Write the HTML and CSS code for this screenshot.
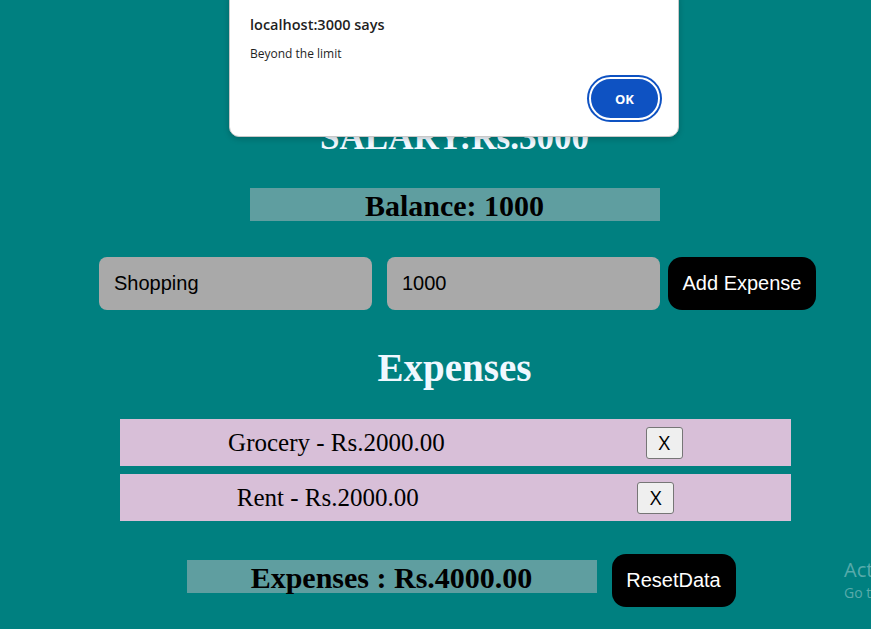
FILE: index.html
```html
<!DOCTYPE html>
<html>
<head>
<meta charset="utf-8">
<link rel="stylesheet" href="styles.css">
</head>
<body>
<div class="app">
  <h1 class="salary">SALARY:Rs.3000</h1>
  <h2 class="balance">Balance: 1000</h2>
  <div class="form">
    <input class="field field-name" type="text" value="Shopping">
    <input class="field field-amount" type="text" value="1000">
    <button class="btn btn-add">Add Expense</button>
  </div>
  <h1 class="list-title">Expenses</h1>
  <ul class="list">
    <li class="item"><span class="item-text">Grocery - Rs.2000.00</span><button class="del">X</button></li>
    <li class="item"><span class="item-text">Rent - Rs.2000.00</span><button class="del">X</button></li>
  </ul>
  <div class="footer">
    <h2 class="total">Expenses : Rs.4000.00</h2>
    <button class="btn btn-reset">ResetData</button>
  </div>
</div>

<div class="dialog">
  <div class="dialog-title">localhost:3000 says</div>
  <div class="dialog-msg">Beyond the limit</div>
  <div class="dialog-actions">
    <button class="dialog-ok">OK</button>
  </div>
</div>

<div class="watermark">
  <div class="wm-title">Activate Windows</div>
  <div class="wm-sub">Go to Settings to activate Windows.</div>
</div>
</body>
</html>
```

FILE: styles.css
```css
html, body {
  margin: 0;
  padding: 0;
  height: 100%;
  overflow: hidden;
}
body {
  background: #008080;
  font-family: "Liberation Serif", serif;
  position: relative;
}
.app {
  padding-left: 38px;
  display: flex;
  flex-direction: column;
  align-items: center;
}
.salary {
  margin: 118px 0 0;
  font-size: 35px;
  line-height: 40px;
  color: #f0f8ff;
  font-weight: bold;
}
.balance {
  margin: 30px 0 0;
  width: 410px;
  height: 33px;
  line-height: 36px;
  background: #5f9ea0;
  text-align: center;
  font-size: 30px;
  color: #000;
}
.form {
  margin-top: 36px;
  padding-left: 6px;
  display: flex;
  align-items: center;
}
.field {
  box-sizing: border-box;
  width: 273px;
  height: 53px;
  border: none;
  border-radius: 8px;
  background: #a9a9a9;
  font-family: "Liberation Sans", Arial, sans-serif;
  font-size: 20px;
  color: #000;
  padding: 0 15px;
  outline: none;
}
.field-name { margin-right: 15px; }
.field-amount { margin-right: 8px; }
.btn {
  background: #000;
  color: #fff;
  border: none;
  border-radius: 14px;
  font-family: "Liberation Sans", Arial, sans-serif;
  font-size: 20px;
  height: 53px;
  padding: 0;
}
.btn-add { width: 148px; }
.list-title {
  margin: 36px 0 0;
  font-size: 39px;
  line-height: 44px;
  color: #f0f8ff;
}
.list {
  list-style: none;
  margin: 29px 0 0;
  padding: 0 0 0 2px;
  display: flex;
  flex-direction: column;
  gap: 8px;
}
.item {
  width: 671px;
  height: 47px;
  background: #d8bfd8;
  display: flex;
  align-items: center;
  justify-content: space-around;
}
.item-text {
  font-size: 25px;
  color: #000;
  padding: 0 15px;
}
.del {
  width: 37px;
  height: 32px;
  margin-right: 15px;
  font-family: "Open Sans", "Liberation Sans", sans-serif;
  font-size: 20px;
  background: #efefef;
  border: 1px solid #767676;
  border-radius: 3px;
  padding: 0;
  color: #000;
}
.footer {
  margin-top: 33px;
  padding-left: 13px;
  display: flex;
  align-items: flex-start;
  gap: 15px;
}
.total {
  margin: 6px 0 0;
  width: 410px;
  height: 33px;
  line-height: 36px;
  background: #5f9ea0;
  text-align: center;
  font-size: 30px;
  color: #000;
}
.btn-reset { width: 124px; }

.dialog {
  position: absolute;
  left: 229px;
  top: -10px;
  width: 450px;
  height: 147px;
  box-sizing: border-box;
  background: #fff;
  border: 1px solid #c8c8c8;
  border-radius: 10px;
  box-shadow: 0 2px 6px rgba(0,0,0,0.2);
  font-family: "Open Sans", "Noto Sans", sans-serif;
  color: #1f1f1f;
  padding: 24px 20px 0 20px;
}
.dialog-title {
  font-size: 14.5px;
  font-weight: 600;
  line-height: 20px;
}
.dialog-msg {
  font-size: 12px;
  margin-top: 10px;
  line-height: 18px;
}
.dialog-actions {
  display: flex;
  justify-content: flex-end;
  margin-top: 14px;
}
.dialog-ok {
  width: 71px;
  height: 43px;
  border-radius: 22px;
  background: #0e52c2;
  border: 2px solid #fff;
  box-shadow: 0 0 0 2px #0e52c2;
  color: #fff;
  font-family: "Open Sans", "Noto Sans", sans-serif;
  font-weight: 700;
  font-size: 13px;
  margin-right: -2px;
}

.watermark {
  position: absolute;
  left: 844px;
  top: 557px;
  white-space: nowrap;
  color: rgba(255,255,255,0.35);
  font-family: "Open Sans", "Noto Sans", sans-serif;
}
.wm-title { font-size: 20px; line-height: 26px; }
.wm-sub { font-size: 14px; line-height: 20px; }
```
